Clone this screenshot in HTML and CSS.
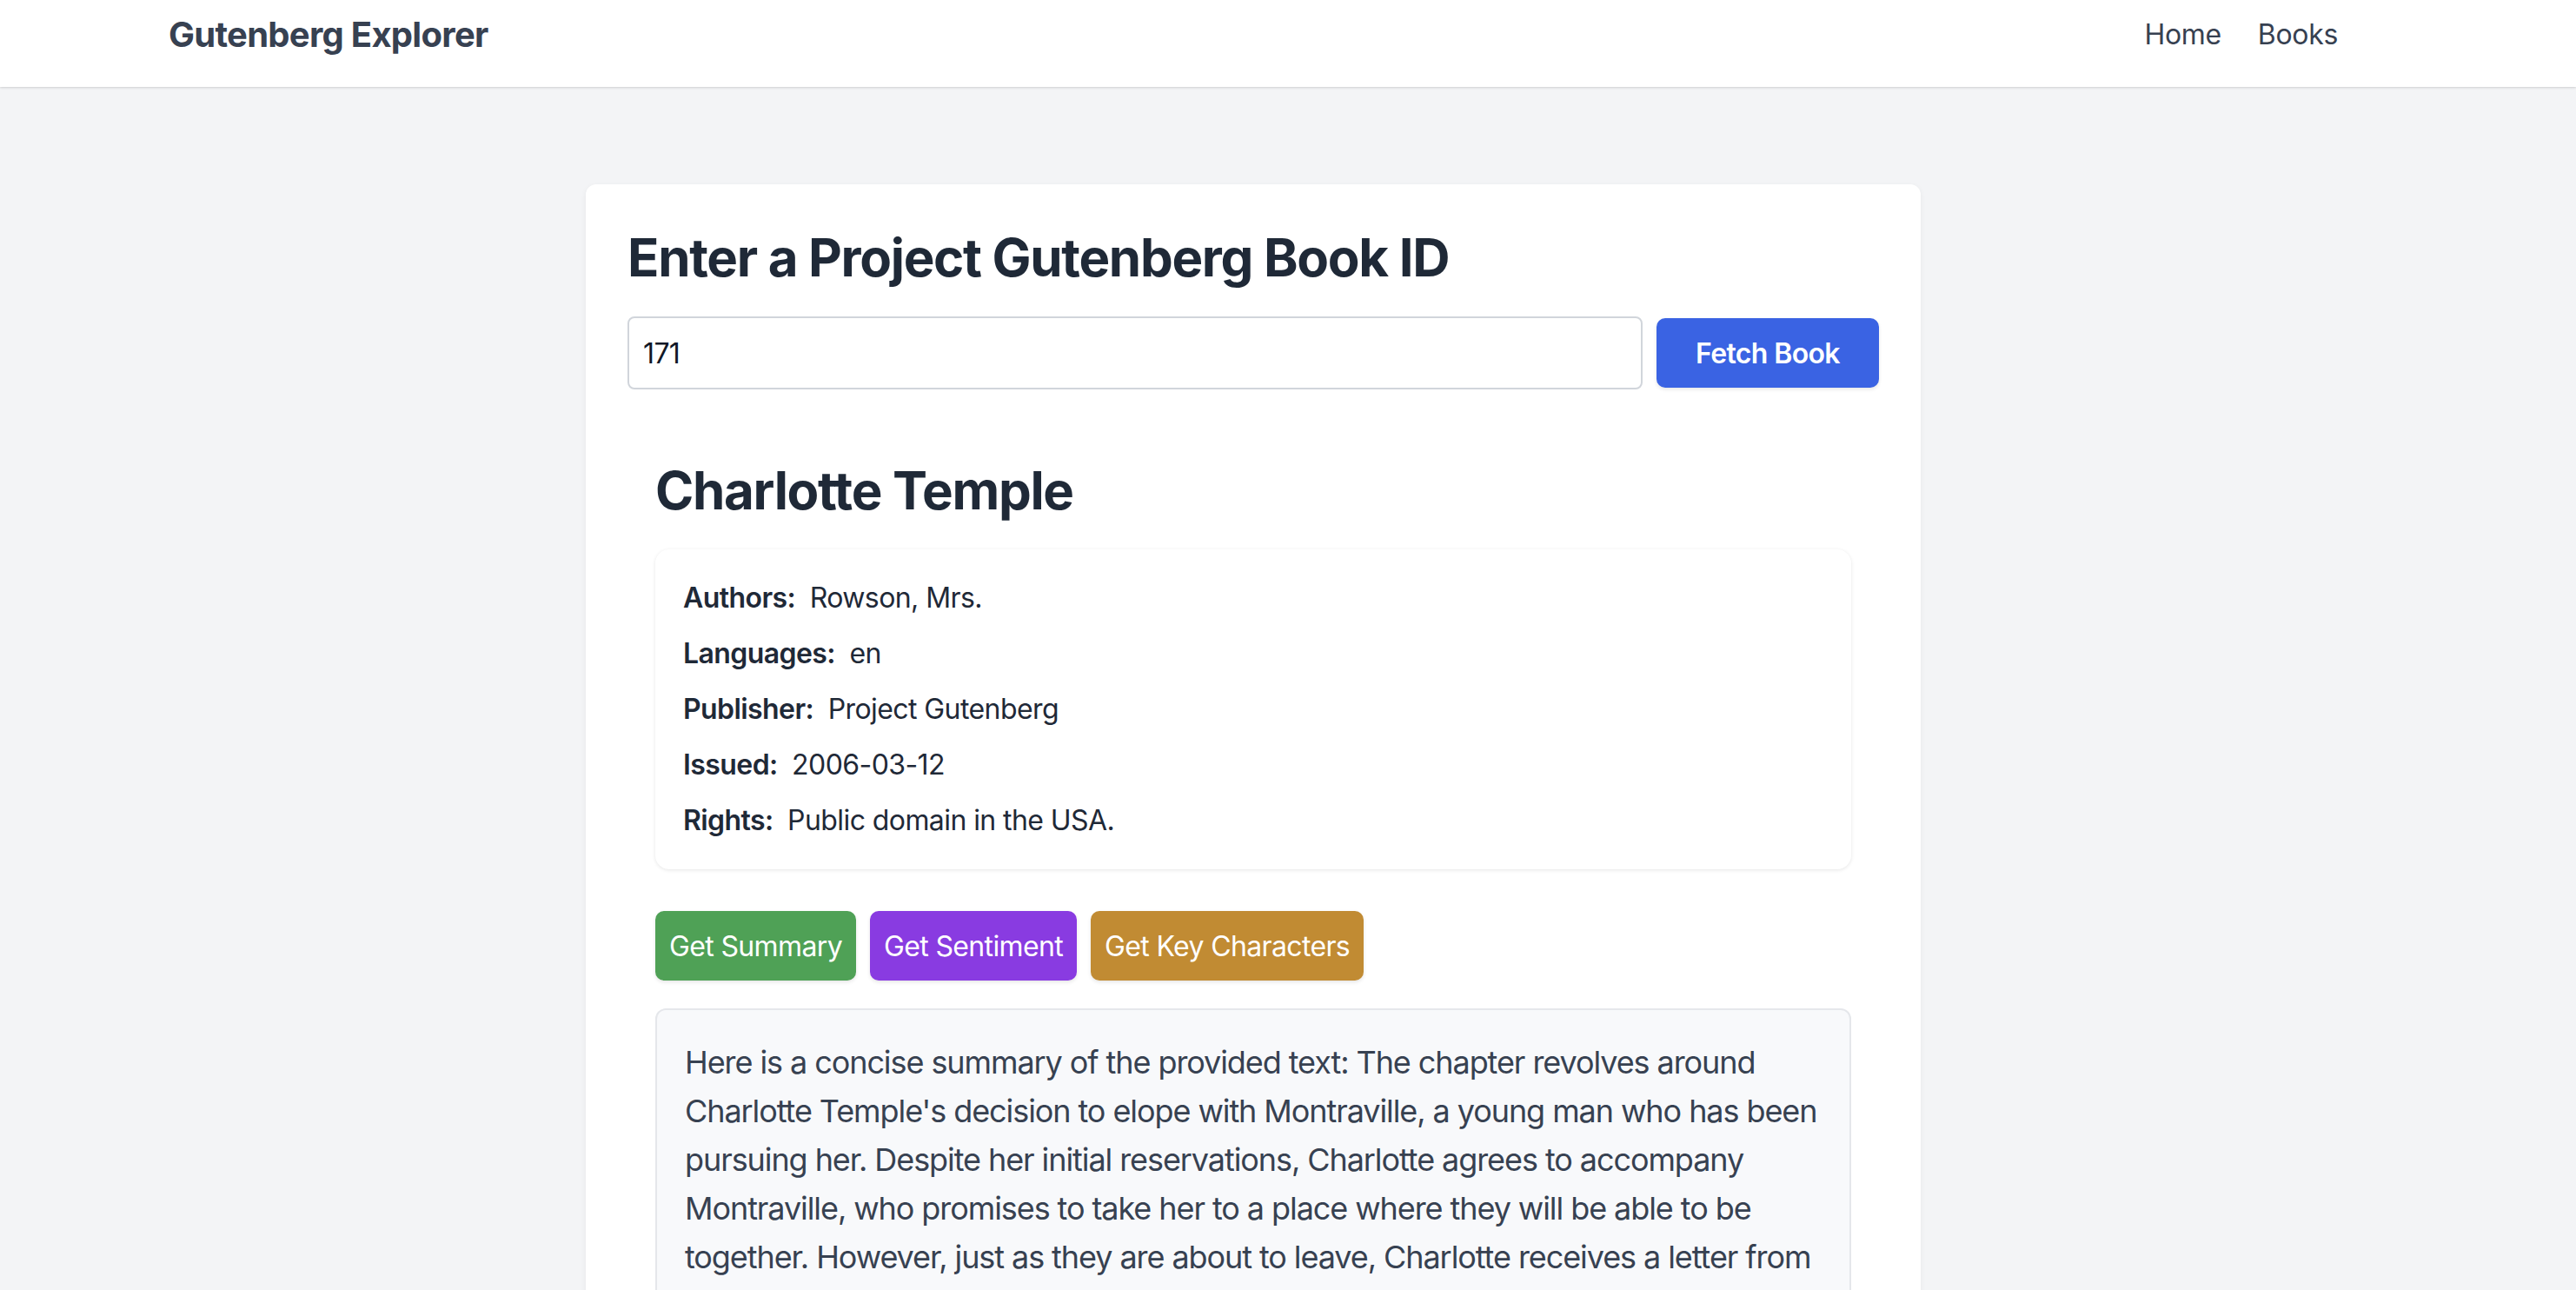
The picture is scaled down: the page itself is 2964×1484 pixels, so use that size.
FILE: index.html
```html
<!DOCTYPE html>
<html lang="en">
<head>
<meta charset="utf-8">
<title>Gutenberg Explorer</title>
<link rel="stylesheet" href="styles.css">
</head>
<body>
<nav class="navbar">
  <div class="nav-inner">
    <a class="brand" href="#">Gutenberg Explorer</a>
    <div class="nav-links">
      <a href="#">Home</a>
      <a href="#">Books</a>
    </div>
  </div>
</nav>
<main class="page">
  <section class="card">
    <h1 class="title">Enter a Project Gutenberg Book ID</h1>
    <form class="fetch-row">
      <input class="book-input" type="text" value="171">
      <button class="btn btn-blue" type="button">Fetch Book</button>
    </form>
    <div class="book">
      <h2 class="title">Charlotte Temple</h2>
      <div class="meta">
        <p><span class="label">Authors:</span> Rowson, Mrs.</p>
        <p><span class="label">Languages:</span> en</p>
        <p><span class="label">Publisher:</span> Project Gutenberg</p>
        <p><span class="label">Issued:</span> 2006-03-12</p>
        <p><span class="label">Rights:</span> Public domain in the USA.</p>
      </div>
      <div class="actions">
        <button class="btn btn-green" type="button">Get Summary</button>
        <button class="btn btn-purple" type="button">Get Sentiment</button>
        <button class="btn btn-gold" type="button">Get Key Characters</button>
      </div>
      <div class="result">
        <p>Here is a concise summary of the provided text: The chapter revolves around<br>Charlotte Temple's decision to elope with Montraville, a young man who has been<br>pursuing her. Despite her initial reservations, Charlotte agrees to accompany<br>Montraville, who promises to take her to a place where they will be able to be<br>together. However, just as they are about to leave, Charlotte receives a letter from</p>
      </div>
    </div>
  </section>
</main>
</body>
</html>
```
FILE: styles.css
```css
* { box-sizing: border-box; }
html, body { margin: 0; padding: 0; }
body {
  background: #f3f4f6;
  font-family: Inter, "Noto Sans", "Liberation Sans", sans-serif;
  color: #1f2937;
  height: 1484px;
  overflow: hidden;
}
.navbar {
  background: #ffffff;
  height: 100px;
  padding-right: 80px;
  box-shadow: 0 1px 3px rgba(0,0,0,0.10), 0 1px 2px rgba(0,0,0,0.06);
  position: relative;
  z-index: 1;
}
.nav-inner {
  max-width: 2560px;
  margin: 0 auto;
  padding: 0 32px 20px;
  height: 100px;
  display: flex;
  align-items: center;
  justify-content: space-between;
}
.brand {
  font-size: 40px;
  line-height: 56px;
  font-weight: 700;
  color: #374151;
  text-decoration: none;
  letter-spacing: -0.018em;
}
.nav-links { display: flex; gap: 42px; }
.nav-links a {
  font-size: 32px;
  line-height: 48px;
  color: #374151;
  text-decoration: none;
  letter-spacing: -0.01em;
}
.page {
  padding: 112px 80px 0 0;
}
.card {
  width: 1536px;
  margin: 0 auto;
  background: #ffffff;
  border-radius: 12px;
  box-shadow: 0 2px 6px rgba(0,0,0,0.06);
  padding: 48px 48px 48px;
  min-height: 1400px;
}
.title {
  margin: 0 0 32px;
  font-size: 60px;
  line-height: 72px;
  font-weight: 700;
  color: #1f2937;
  letter-spacing: -0.022em;
}
.fetch-row {
  display: flex;
  align-items: center;
  gap: 16px;
  margin: 0;
}
.book-input {
  flex: 1;
  height: 84px;
  border: 2px solid #d1d5db;
  border-radius: 8px;
  padding: 0 16px;
  font-family: inherit;
  font-size: 32px;
  color: #111827;
  background: #fff;
  outline: none;
  letter-spacing: -0.02em;
}
.btn {
  border: none;
  border-radius: 10px;
  color: #ffffff;
  font-family: inherit;
  font-size: 32px;
  height: 80px;
  padding: 0 16px;
  cursor: pointer;
  box-shadow: 0 2px 4px rgba(0,0,0,0.10);
  letter-spacing: -0.02em;
}
.btn-blue {
  background: #3a63e3;
  font-weight: 600;
  width: 256px;
  padding: 0;
}
.btn-green { background: #4fa156; }
.btn-purple { background: #893be1; }
.btn-gold { background: #c18b33; }
.book {
  margin-top: 48px;
  padding: 32px;
}
.meta {
  background: #ffffff;
  border-radius: 16px;
  box-shadow: 0 1px 4px rgba(0,0,0,0.10);
  padding: 32px;
  display: flex;
  flex-direction: column;
  gap: 16px;
}
.meta p {
  margin: 0;
  font-size: 32px;
  line-height: 48px;
  color: #1f2937;
  letter-spacing: -0.018em;
}
.label { font-weight: 600; margin-right: 8px; }
.actions {
  display: flex;
  gap: 16px;
  margin-top: 48px;
}
.result {
  margin-top: 32px;
  background: #f8f9fb;
  border: 2px solid #e5e7eb;
  border-radius: 12px;
  padding: 32px;
}
.result p {
  margin: 0;
  font-size: 36px;
  line-height: 56px;
  color: #374151;
  letter-spacing: -0.03em;
  white-space: nowrap;
}
```
